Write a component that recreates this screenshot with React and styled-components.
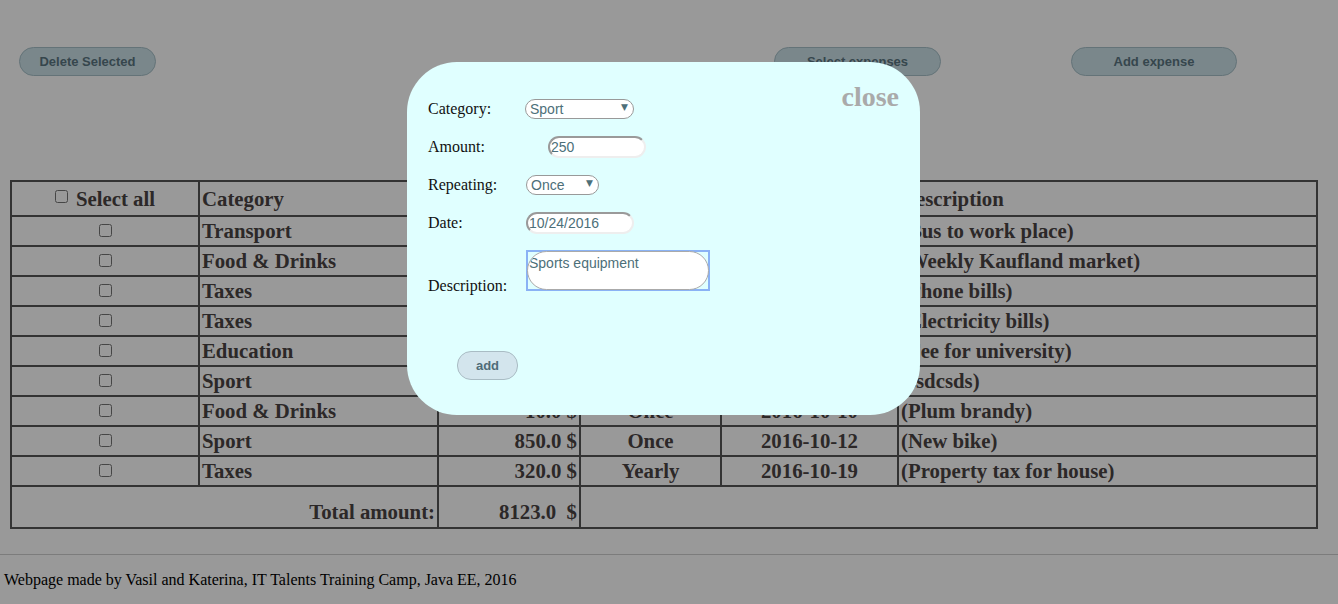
import React from "react";
import styled, { createGlobalStyle } from "styled-components";

const Global = createGlobalStyle`
  html, body { margin: 0; padding: 0; background: #fff; }
  body { font-family: "Liberation Serif", "Times New Roman", serif; color: #111; }
`;

const Page = styled.div`
  width: 1338px;
  min-height: 604px;
`;

const Toolbar = styled.div`
  display: flex;
  align-items: center;
  padding: 47px 0 0 19px;
  height: 29px;
`;

const PillButton = styled.button`
  box-sizing: border-box;
  width: ${(p) => p.$w}px;
  height: 29px;
  margin-left: ${(p) => p.$ml || 0}px;
  border-radius: 15px;
  border: 1px solid #a7c0c8;
  background: #cbe1e8;
  color: #5a7681;
  font-family: "Liberation Sans", Arial, sans-serif;
  font-weight: bold;
  font-size: 13px;
  padding: 0;
  cursor: pointer;
`;

const Table = styled.table`
  margin: 104px 0 0 10px;
  width: 1308px;
  border-collapse: collapse;
  table-layout: fixed;
  font-family: "Liberation Serif", "Times New Roman", serif;
  font-size: 20.8px;
  font-weight: bold;
  color: #4a4444;
`;

const Cell = styled.td`
  border: 2px solid #555;
  padding: 0 2px;
  height: 28px;
  line-height: 24px;
  text-align: ${(p) => p.$align || "left"};
  vertical-align: middle;
  white-space: nowrap;
  overflow: hidden;
`;

const HeadCell = styled(Cell).attrs({ as: "th" })`
  height: 33px;
  font-weight: bold;
  line-height: 22px;
`;

const TotalCell = styled(Cell)`
  height: 30px;
  padding-top: 10px;
`;

const Check = styled.input.attrs({ type: "checkbox" })`
  width: 13px;
  height: 13px;
  ${(p) =>
    p.$inline
      ? "margin: 0 8px 0 0; vertical-align: 3px;"
      : "display: block; margin: 0 auto; position: relative; top: -1px;"}
`;

const Footer = styled.footer`
  margin-top: 25px;
  border-top: 1px solid #cfcfcf;
  padding: 16px 0 0 4px;
  font-family: "Liberation Serif", "Times New Roman", serif;
  font-size: 16px;
  color: #000;
`;

const Backdrop = styled.div`
  position: fixed;
  inset: 0;
  background: rgba(0, 0, 0, 0.4);
`;

const Modal = styled.div`
  position: fixed;
  top: 62px;
  left: 407px;
  width: 513px;
  height: 353px;
  box-sizing: border-box;
  border-radius: 50px;
  background: #e0ffff;
  padding: 36px 21px 0 21px;
`;

const Close = styled.span`
  position: absolute;
  top: 19px;
  right: 21px;
  font-family: "Liberation Serif", "Times New Roman", serif;
  font-weight: bold;
  font-size: 28px;
  color: #aaa;
  cursor: pointer;
`;

const Form = styled.form`
  display: flex;
  flex-direction: column;
  gap: 16px;
`;

const Row = styled.div`
  display: flex;
  align-items: ${(p) => (p.$bottom ? "flex-end" : "center")};
  min-height: 22px;
`;

const Label = styled.label`
  width: 97px;
  flex: none;
  font-family: "Liberation Serif", "Times New Roman", serif;
  font-size: 16px;
  color: #111;
  margin-bottom: ${(p) => (p.$bottom ? "-4px" : "0")};
`;

const SelectWrap = styled.div`
  position: relative;
  width: ${(p) => p.$w}px;
  height: 20px;
  margin-left: ${(p) => p.$ml || 0}px;
`;

const Select = styled.select`
  appearance: none;
  width: 100%;
  height: 100%;
  box-sizing: border-box;
  border: 1px solid #999;
  border-radius: 10px;
  background: #fff;
  color: #4d6f79;
  font-family: "Liberation Sans", Arial, sans-serif;
  font-size: 14px;
  padding: 0 0 0 4px;
  outline: none;
`;

const Arrow = styled.span`
  position: absolute;
  right: 6px;
  top: 3px;
  font-size: 9px;
  color: #4d6f79;
  pointer-events: none;
  font-family: "DejaVu Sans", sans-serif;
`;

const TextInput = styled.input`
  box-sizing: border-box;
  width: ${(p) => p.$w}px;
  height: 22px;
  margin-left: ${(p) => p.$ml || 0}px;
  border: 2px solid #eee;
  border-top-color: #9a9a9a;
  border-left-color: #9a9a9a;
  border-radius: 11px;
  background: #fff;
  color: #4d6f79;
  font-family: "Liberation Sans", Arial, sans-serif;
  font-size: 14px;
  padding: 0 0 0 1px;
  outline: none;
`;

const FocusRing = styled.div`
  box-sizing: border-box;
  width: 184px;
  height: 41px;
  margin-left: 1px;
  border: 2px solid #8ab2f5;
  display: flex;
`;

const TextArea = styled.textarea`
  box-sizing: border-box;
  flex: 1;
  margin: -1px;
  border: 1px solid #aaa;
  border-radius: 20px;
  outline: none;
  background: #fff;
  color: #4d6f79;
  font-family: "Liberation Sans", Arial, sans-serif;
  font-size: 14px;
  padding: 3px 1px;
  resize: none;
`;

const AddButton = styled.button`
  align-self: flex-start;
  margin: 44px 0 0 29px;
  width: 61px;
  height: 29px;
  border-radius: 14px;
  border: 1px solid #a9bcc4;
  background: #d3e5ed;
  color: #4f6c78;
  font-family: "Liberation Sans", Arial, sans-serif;
  font-weight: bold;
  font-size: 13px;
  padding: 0;
`;

const rows = [
  ["Transport", "43.0 $", "Daily", "2016-10-01", "(Bus to work place)"],
  ["Food & Drinks", "150.0 $", "Weekly", "2016-10-03", "(Weekly Kaufland market)"],
  ["Taxes", "50.0 $", "Monthly", "2016-10-05", "(Phone bills)"],
  ["Taxes", "100.0 $", "Monthly", "2016-10-05", "(Electricity bills)"],
  ["Education", "6500.0 $", "Yearly", "2016-10-07", "(Fee for university)"],
  ["Sport", "100.0 $", "Once", "2016-10-08", "(ssdcsds)"],
  ["Food & Drinks", "10.0 $", "Once", "2016-10-10", "(Plum brandy)"],
  ["Sport", "850.0 $", "Once", "2016-10-12", "(New bike)"],
  ["Taxes", "320.0 $", "Yearly", "2016-10-19", "(Property tax for house)"],
];

export default function App() {
  return (
    <>
      <Global />
      <Page>
        <Toolbar>
          <PillButton $w={137}>Delete Selected</PillButton>
          <PillButton $w={167} $ml={618}>Select expenses</PillButton>
          <PillButton $w={166} $ml={130}>Add expense</PillButton>
        </Toolbar>
        <Table>
          <colgroup>
            <col style={{ width: 188 }} />
            <col style={{ width: 239 }} />
            <col style={{ width: 142 }} />
            <col style={{ width: 141 }} />
            <col style={{ width: 177 }} />
            <col />
          </colgroup>
          <thead>
            <tr>
              <HeadCell $align="center"><Check $inline />Select all</HeadCell>
              <HeadCell>Category</HeadCell>
              <HeadCell $align="center">Amount</HeadCell>
              <HeadCell $align="center">Repeating</HeadCell>
              <HeadCell $align="center">Date</HeadCell>
              <HeadCell>Description</HeadCell>
            </tr>
          </thead>
          <tbody>
            {rows.map((r, i) => (
              <tr key={i}>
                <Cell $align="center"><Check /></Cell>
                <Cell>{r[0]}</Cell>
                <Cell $align="right">{r[1]}</Cell>
                <Cell $align="center">{r[2]}</Cell>
                <Cell $align="center">{r[3]}</Cell>
                <Cell>{r[4]}</Cell>
              </tr>
            ))}
            <tr>
              <TotalCell colSpan={2} $align="right">Total amount:</TotalCell>
              <TotalCell $align="right">8123.0&nbsp; $</TotalCell>
              <TotalCell colSpan={3} />
            </tr>
          </tbody>
        </Table>
        <Footer>Webpage made by Vasil and Katerina, IT Talents Training Camp, Java EE, 2016</Footer>
      </Page>
      <Backdrop />
      <Modal>
        <Close>close</Close>
        <Form onSubmit={(e) => e.preventDefault()}>
          <Row>
            <Label>Category:</Label>
            <SelectWrap $w={109}>
              <Select defaultValue="Sport">
                <option>Transport</option>
                <option>Food &amp; Drinks</option>
                <option>Taxes</option>
                <option>Education</option>
                <option>Sport</option>
              </Select>
              <Arrow>▼</Arrow>
            </SelectWrap>
          </Row>
          <Row>
            <Label>Amount:</Label>
            <TextInput $w={98} $ml={23} defaultValue="250" />
          </Row>
          <Row>
            <Label>Repeating:</Label>
            <SelectWrap $w={73} $ml={1}>
              <Select defaultValue="Once">
                <option>Once</option>
                <option>Daily</option>
                <option>Weekly</option>
                <option>Monthly</option>
                <option>Yearly</option>
              </Select>
              <Arrow>▼</Arrow>
            </SelectWrap>
          </Row>
          <Row>
            <Label>Date:</Label>
            <TextInput $w={108} $ml={1} defaultValue="10/24/2016" />
          </Row>
          <Row $bottom>
            <Label $bottom>Description:</Label>
            <FocusRing>
              <TextArea defaultValue="Sports equipment" />
            </FocusRing>
          </Row>
          <AddButton type="submit">add</AddButton>
        </Form>
      </Modal>
    </>
  );
}
